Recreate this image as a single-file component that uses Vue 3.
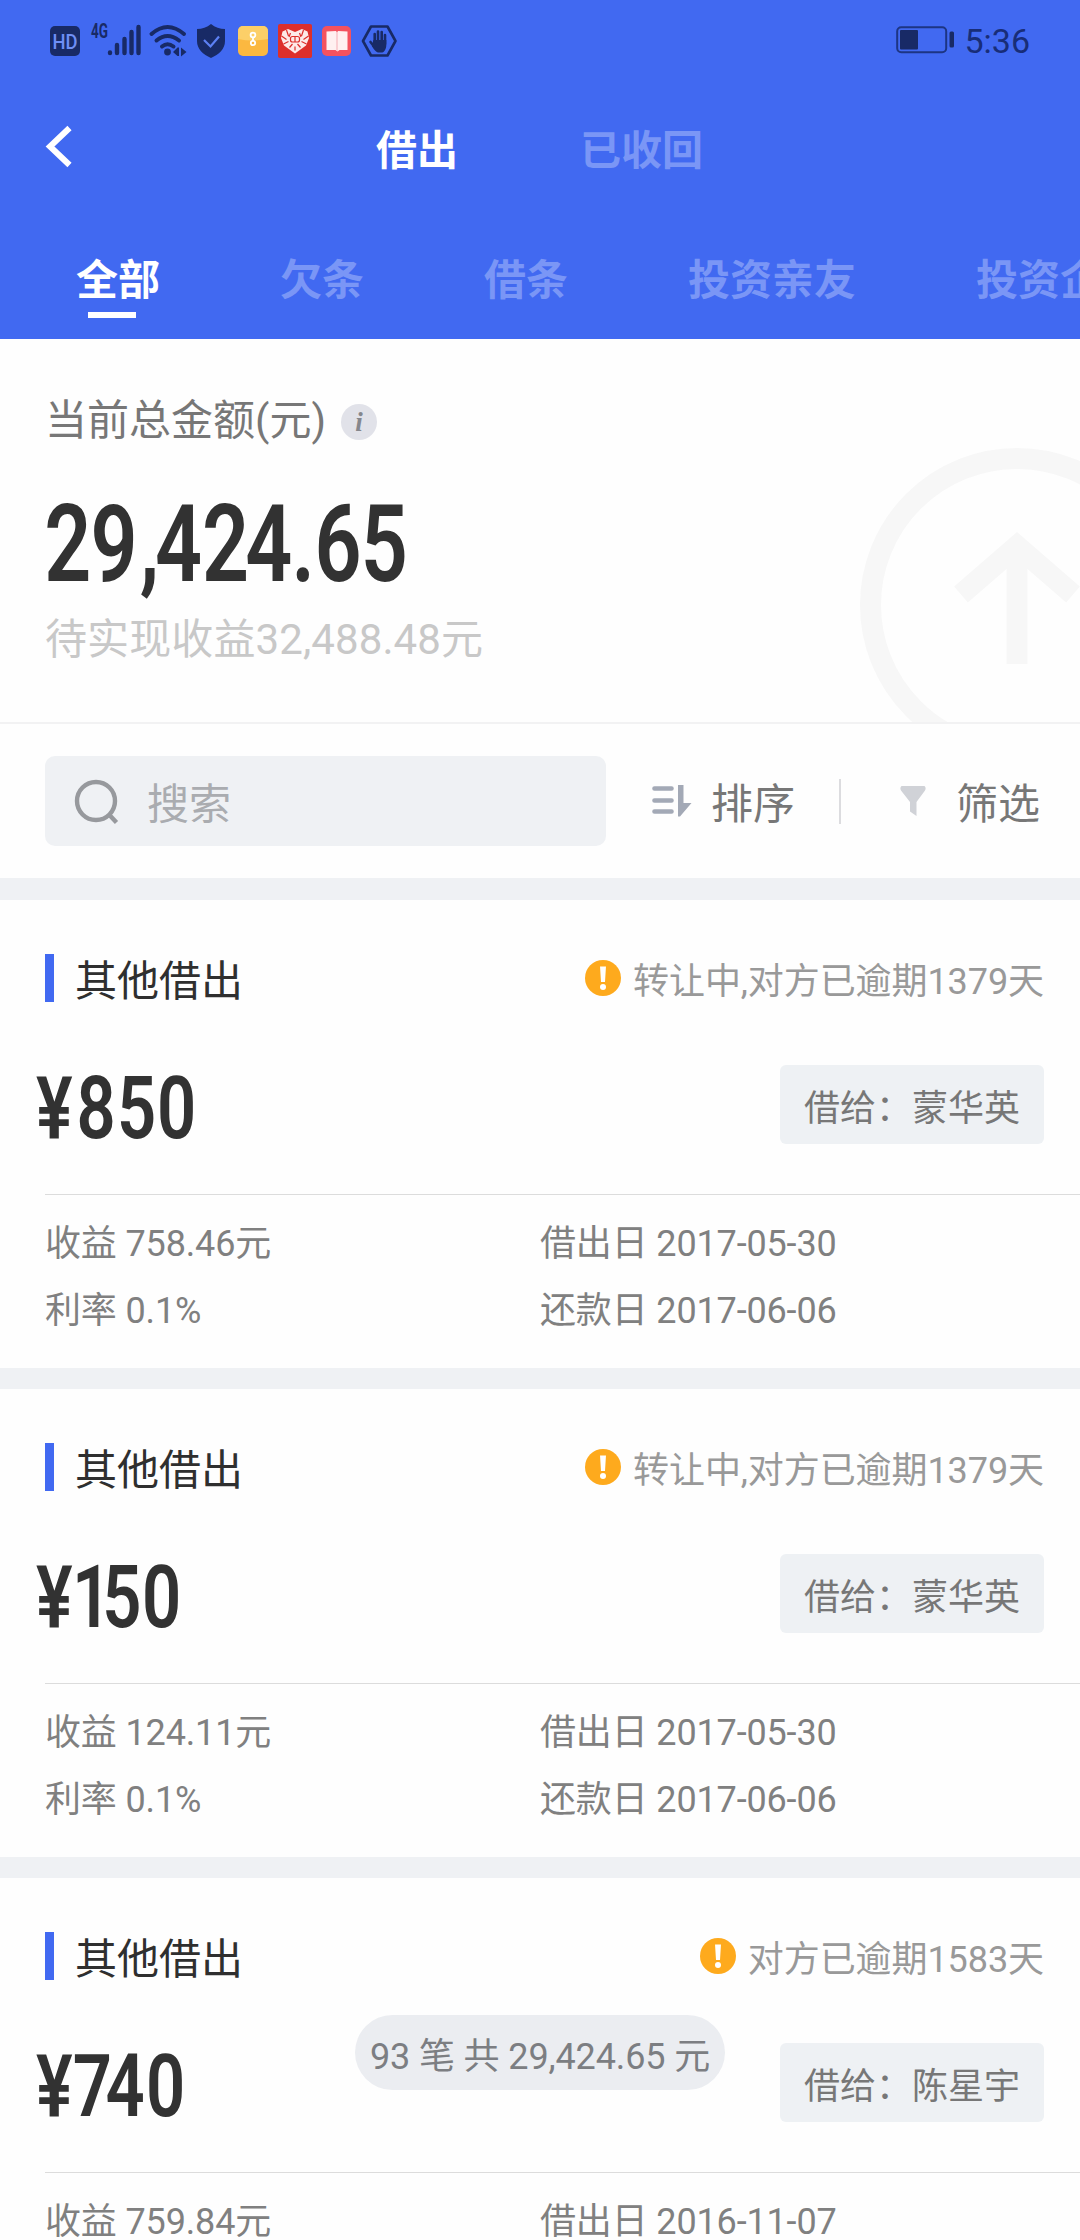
<template>
    <div class="page">
        <header class="header">
            <div class="status-bar">
                <svg class="status-icons" width="350" height="40" viewBox="50 20 350 40">
                    <!-- HD -->
                    <rect x="50" y="26" width="30" height="30" rx="5" fill="#182a66" />
                    <text class="hd" x="65" y="48.500" text-anchor="middle" textLength="25"
                        lengthAdjust="spacingAndGlyphs">HD</text>
                    <!-- 信号 -->
                    <text class="net" x="91" y="38" textLength="17" lengthAdjust="spacingAndGlyphs">4G</text>
                    <g stroke="#182a66" stroke-width="4.400" stroke-linecap="round">
                        <path d="M110 52.500v.5M117 45v8M124.500 39v14M131.500 32v21M138.500 27v26" />
                    </g>
                    <!-- wifi -->
                    <g fill="none" stroke="#182a66" stroke-width="4" stroke-linecap="round">
                        <path d="M151.500 34Q167.500 20 184 34M156.500 40.500Q167.500 31.500 179 40.500M162 46.500Q167.500 42 173.500 46.500" />
                    </g>
                    <circle cx="167.500" cy="52" r="3.400" fill="#182a66" />
                    <path d="M173 52l4.500-4.500h1.500v8.500h-1.500zM186.500 52l-5.500 4.500v-9z" fill="#182a66" />
                    <!-- 盾牌 -->
                    <path d="M211 24c4 3.500 9 5 14 5v12c0 8-6 13.500-14 17c-8-3.500-14-9-14-17V29c5 0 10-1.500 14-5z"
                        fill="#182a66" />
                    <path d="M204 40l6.500 6.500l8.500-10" fill="none" stroke="#5c80f4" stroke-width="2.200" />
                    <!-- 文件 -->
                    <rect x="238" y="26" width="30" height="30" rx="5" fill="#fbb840" />
                    <path d="M238 39V31a5 5 0 0 1 5-5h20a5 5 0 0 1 5 5v8q-15 3-30 0z" fill="#fccf68" />
                    <g fill="none" stroke="#fff" stroke-width="1.800">
                        <circle cx="253" cy="35" r="2.400" />
                        <circle cx="253" cy="43" r="2.200" />
                        <path d="M253 37.500v3.500" />
                    </g>
                    <!-- 红心 -->
                    <rect x="278" y="24" width="34" height="34" rx="2" fill="#dd2f2b" />
                    <path d="M295 53.500L284 45.500l-3-7.500l1.500-6.500l5.500-2.500l7 3l7-3l5.500 2.500l1.500 6.500l-3 7.500z"
                        fill="#fdeae8" />
                    <path d="M281.500 36l5 3.500M286.500 30l2 6M283.500 44l5-2.500M303.500 30l-2 6M308.500 36l-5 3.500M306.500 44l-5-2.500M290.500 33l-1.500 4M299.500 33l1.500 4M289.500 47.500l3-3.500M300.500 47.500l-3-3.500M295 46.500v4"
                        fill="none" stroke="#dd2f2b" stroke-width="1.200" />
                    <rect x="290.500" y="36.500" width="9" height="5.500" rx="2" fill="none" stroke="#dd2f2b"
                        stroke-width="1.200" />
                    <path d="M295 37v5" stroke="#dd2f2b" stroke-width="1.200" />
                    <!-- 阅读 -->
                    <rect x="322" y="26" width="29" height="30" rx="5" fill="#f4525f" />
                    <path d="M326.500 31.500l9.500-.5l1 1.500l1-1.500l9.500.5v18.500h-8l-2 1.500l-2-1.500h-9z" fill="#fff0f0" />
                    <path d="M337 32v19" stroke="#f9c3c8" stroke-width="1.500" />
                    <!-- 手掌 -->
                    <path d="M371 26.500h16.500l8 14.500l-8 14.500H371l-8-14.500z" fill="none" stroke="#182a66"
                        stroke-width="2.600" stroke-linejoin="round" />
                    <g stroke="#182a66" stroke-width="2.600" stroke-linecap="round">
                        <path d="M374.700 34v9M378 31.500v10M381.700 32v10M385 35v9M370.500 42l4 5" />
                    </g>
                    <path d="M373.400 40h12.900v5c0 4-2 7-4 7.500h-4.500c-2.500-1-4-3.500-6-6.500z" fill="#182a66" />
                </svg>
                <div class="status-right">
                    <svg width="58" height="28" viewBox="0 0 58 28">
                        <rect x="1.200" y="1.200" width="49" height="25" rx="4" fill="none" stroke="#1d3583"
                            stroke-width="2" />
                        <rect x="4" y="4" width="18" height="19.500" rx="1" fill="#182a66" />
                        <rect x="53.500" y="5.500" width="4.500" height="16" rx="1.500" fill="#182a66" />
                    </svg>
                    <span class="clock">5:36</span>
                </div>
            </div>

            <div class="title-bar">
                <svg class="back" width="28" height="42" viewBox="0 0 28 42" @click="goBack">
                    <path d="M23.500 2L4 20.500L23.500 39" fill="none" stroke="#fff" stroke-width="6" />
                </svg>
                <span v-for="(name, index) in modes" :key="name" class="mode" :class="{ active: index === currentMode }"
                    @click="currentMode = index">{{ name }}</span>
            </div>

            <nav class="tabs">
                <span v-for="(tab, index) in tabs" :key="tab" class="tab" :class="{ active: index === currentTab }"
                    @click="currentTab = index">{{ tab }}</span>
            </nav>
        </header>

        <section class="summary">
            <div class="summary-label">
                <span>当前总金额(元)</span>
                <span class="info">i</span>
            </div>
            <svg class="total" width="480" height="100">
                <text transform="scale(.77 1)" x="-1 59 123 143 204 260 320 350 410" y="78">29,424.65</text>
            </svg>
            <div class="pending">待实现收益32,488.48元</div>
            <svg class="watermark" width="220" height="274" viewBox="860 448 220 274">
                <g fill="none" stroke="#f7f7f7" stroke-width="21">
                    <circle cx="1017" cy="605" r="146.500" />
                    <path d="M961 594.500L1017 546L1073 594.500" />
                    <path d="M1017 550v114" />
                </g>
            </svg>
        </section>

        <section class="toolbar">
            <div class="search">
                <svg width="46" height="46" viewBox="0 0 46 46">
                    <circle cx="21" cy="22" r="19" fill="none" stroke="#97999d" stroke-width="4.400" />
                    <path d="M34 35.500l7.500 8" stroke="#97999d" stroke-width="4.400" />
                </svg>
                <span>搜索</span>
            </div>
            <div class="action sort">
                <svg width="40" height="32" viewBox="0 0 40 32">
                    <path d="M2.500 3.500h17M2.500 15.500h17M2.500 26.500h17" stroke="#a3a9b6" stroke-width="4.600"
                        stroke-linecap="round" />
                    <path d="M26 0h5.500v18h8L28 31.500h-2z" fill="#a3a9b6" />
                </svg>
                <span>排序</span>
            </div>
            <i class="split"></i>
            <div class="action filter">
                <svg width="26" height="32" viewBox="0 0 26 32">
                    <path d="M1.500 1h23q2 2 .5 4.500L16.500 17v14L10 26.500V17L1 5.500Q-.5 3 1.500 1z" fill="#d0d2d7" />
                </svg>
                <span>筛选</span>
            </div>
        </section>

        <section v-for="(item, index) in loans" :key="index" class="card">
            <div class="card-head">
                <span class="card-title">其他借出</span>
                <div class="overdue">
                    <svg width="36" height="36" viewBox="0 0 36 36">
                        <circle cx="18" cy="18" r="18" fill="#feaa1d" />
                        <path d="M15 6.500h6l-1 15.500h-4z" fill="#fff" />
                        <circle cx="18" cy="27" r="3" fill="#fff" />
                    </svg>
                    <span>{{ item.status }}</span>
                </div>
            </div>
            <div class="card-main">
                <svg class="amount" width="260" height="79">
                    <text transform="scale(.78 1)" :x="item.spacing" y="73">¥{{ item.amount }}</text>
                </svg>
                <span class="borrower">借给：{{ item.borrower }}</span>
            </div>
            <div class="card-info">
                <span>收益 {{ item.profit }}元</span>
                <span>借出日 {{ item.lendDate }}</span>
                <span>利率 {{ item.rate }}</span>
                <span>还款日 {{ item.repayDate }}</span>
            </div>
        </section>

        <div class="toast">93 笔 共 29,424.65 元</div>
    </div>
</template>

<script setup>
import { ref } from 'vue';

const modes = ['借出', '已收回'];
const tabs = ['全部', '欠条', '借条', '投资亲友', '投资企业'];

const currentMode = ref(0);
const currentTab = ref(0);

// spacing: 金额每个字符的横向位置
const loans = ref([
    {
        status: '转让中,对方已逾期1379天',
        amount: 850,
        spacing: '0 52 104 155',
        borrower: '蒙华英',
        profit: '758.46',
        rate: '0.1%',
        lendDate: '2017-05-30',
        repayDate: '2017-06-06',
    },
    {
        status: '转让中,对方已逾期1379天',
        amount: 150,
        spacing: '0 46 85 136',
        borrower: '蒙华英',
        profit: '124.11',
        rate: '0.1%',
        lendDate: '2017-05-30',
        repayDate: '2017-06-06',
    },
    {
        status: '对方已逾期1583天',
        amount: 740,
        spacing: '0 47 89 141',
        borrower: '陈星宇',
        profit: '759.84',
        rate: '0.1%',
        lendDate: '2016-11-07',
        repayDate: '2016-11-14',
    },
]);

const goBack = () => {
    window.history.back();
};
</script>

<style>
body {
    margin: 0;
    background-color: #fff;
}
</style>

<style scoped>
.page {
    position: relative;
    width: 1080px;
    height: 2240px;
    overflow: hidden;
    background-color: #fefefe;
    font-family: Roboto, "Noto Sans CJK SC", sans-serif;
    font-size: 42px;
    line-height: 50px;
    white-space: nowrap;
}

svg {
    display: block;
    flex-shrink: 0;
    overflow: visible;
}

.header {
    height: 339px;
    background-color: #4169f1;
    color: #fff;
    font-weight: bold;
}

.status-bar {
    display: flex;
    justify-content: space-between;
    align-items: center;
    height: 80px;
    padding: 0 50px;
}

.hd {
    font-size: 20px;
    font-weight: 500;
    fill: #6f8ff5;
}

.net {
    font-size: 20px;
    font-weight: 700;
    fill: #182a66;
}

.status-right {
    display: flex;
    align-items: center;
    gap: 10px;
}

.clock {
    font-size: 34px;
    font-weight: normal;
    color: #182d78;
    padding-top: 2px;
}

.title-bar {
    display: flex;
    align-items: center;
    height: 134px;
    padding-left: 46px;
}

.mode {
    padding-top: 8px;
    margin-left: 122px;
    font-size: 41px;
    color: #7a96f6;
}

.mode.active {
    margin-left: 302px;
    color: #fff;
}

.tabs {
    display: flex;
    gap: 120px;
    padding: 42px 0 0 76px;
}

.tab {
    color: #7a96f6;
}

.tab.active {
    color: #fff;
}

.tab.active::after {
    content: "";
    display: block;
    width: 48px;
    height: 6px;
    margin: 6px 0 0 12px;
    background-color: #fff;
}

.summary {
    position: relative;
    height: 383px;
    padding-left: 45px;
    border-bottom: 2px solid #f2f2f3;
    box-sizing: content-box;
}

.summary-label {
    display: flex;
    align-items: center;
    gap: 15px;
    padding-top: 57px;
    color: #777;
}

.info {
    width: 36px;
    height: 36px;
    margin-top: 2px;
    border-radius: 50%;
    background-color: #e1e2e9;
    color: #85878d;
    font: italic bold 27px/36px "Liberation Serif", serif;
    text-align: center;
}

.total {
    margin-top: 57px;
}

.total text {
    font-size: 107px;
    font-weight: 600;
    fill: #323232;
}

.pending {
    margin-top: 12px;
    letter-spacing: 0.1px;
    color: #c8c8c8;
}

.watermark {
    position: absolute;
    right: 0;
    bottom: 0;
    overflow: hidden;
}

.toolbar {
    display: flex;
    align-items: center;
    height: 154px;
    padding-left: 45px;
    border-bottom: 22px solid #eff1f4;
    color: #777;
}

.search {
    display: flex;
    align-items: center;
    gap: 26px;
    width: 531px;
    height: 90px;
    padding-left: 30px;
    border-radius: 10px;
    background-color: #eff1f4;
    color: #aaacb0;
}

.search svg {
    margin-top: 1px;
}

.search span,
.action span {
    padding-top: 8px;
}

.action {
    display: flex;
    align-items: center;
}

.sort {
    gap: 19px;
    margin-left: 46px;
}

.filter {
    gap: 30px;
}

.split {
    width: 2px;
    height: 45px;
    margin: 0 59px 0 44px;
    background-color: #dcdcdf;
}

.card {
    height: 468px;
    border-bottom: 21px solid #eff1f4;
}

.card-head {
    display: flex;
    align-items: center;
    justify-content: space-between;
    padding: 54px 36px 0 45px;
    height: 48px;
}

.card-title {
    height: 48px;
    line-height: 56px;
    padding-left: 21px;
    border-left: 9px solid #4169f1;
    color: #2f2f2f;
}

.overdue {
    display: flex;
    align-items: center;
    gap: 12px;
    font-size: 36px;
    letter-spacing: -0.08px;
    color: #999;
}

.overdue span {
    padding-top: 8px;
}

.card-main {
    display: flex;
    justify-content: space-between;
    padding: 63px 36px 50px;
}

.amount text {
    font-size: 88px;
    font-weight: 600;
    fill: #323232;
}

.borrower {
    height: 79px;
    line-height: 88px;
    padding: 0 24px;
    border-radius: 6px;
    background-color: #eef1f4;
    font-size: 36px;
    color: #777;
}

.card-info {
    display: grid;
    grid-template-columns: 495px 1fr;
    row-gap: 17px;
    margin-left: 45px;
    padding-top: 24px;
    border-top: 1px solid #dcdcdc;
    font-size: 36px;
    letter-spacing: -0.15px;
    color: #808080;
}

.toast {
    position: absolute;
    left: 355px;
    top: 2015px;
    width: 370px;
    height: 75px;
    line-height: 84px;
    border-radius: 38px;
    background-color: #ebedf1;
    font-size: 36px;
    letter-spacing: -0.12px;
    text-align: center;
    color: #7c7e82;
}
</style>
